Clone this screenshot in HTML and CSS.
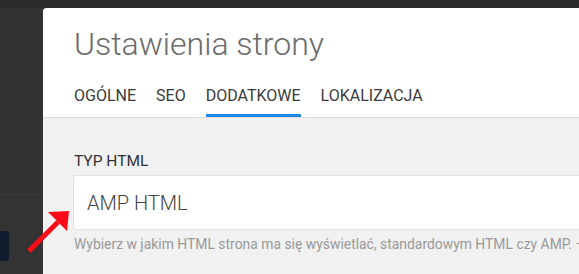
FILE: index.html
```html
<!DOCTYPE html>
<html lang="pl">
<head>
<meta charset="utf-8">
<title>Ustawienia strony</title>
<link rel="stylesheet" href="styles.css">
</head>
<body>
<div class="topbar"></div>
<div class="main">
  <aside class="side">
    <div class="side-top"></div>
    <div class="side-bottom">
      <div class="side-btn"></div>
    </div>
  </aside>
  <section class="modal">
    <header class="modal-head">
      <h1 class="title">Ustawienia strony</h1>
      <nav class="tabs">
        <span class="tab">OGÓLNE</span>
        <span class="tab">SEO</span>
        <span class="tab active">DODATKOWE</span>
        <span class="tab">LOKALIZACJA</span>
      </nav>
    </header>
    <div class="modal-body">
      <label class="label">TYP HTML</label>
      <div class="input">AMP HTML</div>
      <p class="help">Wybierz w jakim HTML strona ma się wyświetlać, standardowym HTML czy AMP. –</p>
    </div>
  </section>
</div>
<svg class="arrow" width="80" height="70" viewBox="0 204 80 70">
  <line x1="29" y1="251" x2="58" y2="222" stroke="#ff0a1a" stroke-width="5"/>
  <polygon points="48,212 69,211 67,231" fill="#ff0a1a"/>
</svg>
</body>
</html>
```
FILE: styles.css
```css
* { box-sizing: border-box; }
html, body {
  margin: 0;
  padding: 0;
  width: 579px;
  height: 274px;
  overflow: hidden;
  background: #333;
  font-family: Roboto, "Noto Sans", sans-serif;
}
.topbar {
  height: 8px;
  background: #2b2b2b;
}
.main {
  display: flex;
  height: 266px;
}
.side {
  width: 43px;
  flex: none;
  display: flex;
  flex-direction: column;
}
.side-top {
  height: 187px;
  background: #323232;
  border-bottom: 1px solid #3a3a3a;
}
.side-bottom {
  flex: 1;
  background: #333;
  padding-top: 36px;
}
.side-btn {
  width: 9px;
  height: 30px;
  background: #0e1c2e;
  border-radius: 0 3px 3px 0;
}
.modal {
  flex: 1;
  min-width: 0;
  background: #f1f1f1;
  border-top-left-radius: 4px;
  overflow: hidden;
  display: flex;
  flex-direction: column;
}
.modal-head {
  background: #fff;
  border-bottom: 1px solid #ddd;
  padding: 16px 0 0 31px;
}
.title {
  margin: 0;
  font-size: 32px;
  line-height: 40px;
  font-weight: 300;
  color: #6b6b6b;
  white-space: nowrap;
}
.tabs {
  display: flex;
  gap: 20px;
  margin-top: 22px;
}
.tab {
  font-size: 16px;
  line-height: 20px;
  color: #3a3a3a;
  padding-bottom: 8px;
  border-bottom: 3px solid transparent;
  white-space: nowrap;
}
.tab.active {
  border-bottom-color: #1e88e5;
}
.modal-body {
  padding: 34px 0 0 30px;
}
.label {
  display: block;
  font-size: 15.5px;
  line-height: 18px;
  font-weight: 400;
  color: #333;
  padding-left: 1px;
}
.input {
  margin-top: 5px;
  height: 55px;
  background: #fff;
  border: 1px solid #e2e2e2;
  border-right: none;
  border-radius: 3px 0 0 3px;
  padding-left: 13px;
  display: flex;
  align-items: center;
  font-size: 20px;
  font-weight: 300;
  color: #444;
}
.help {
  margin: 5px 0 0 1px;
  font-size: 13.9px;
  line-height: 18px;
  color: #999;
  white-space: nowrap;
}
.arrow {
  position: absolute;
  left: 0;
  top: 204px;
}
```
